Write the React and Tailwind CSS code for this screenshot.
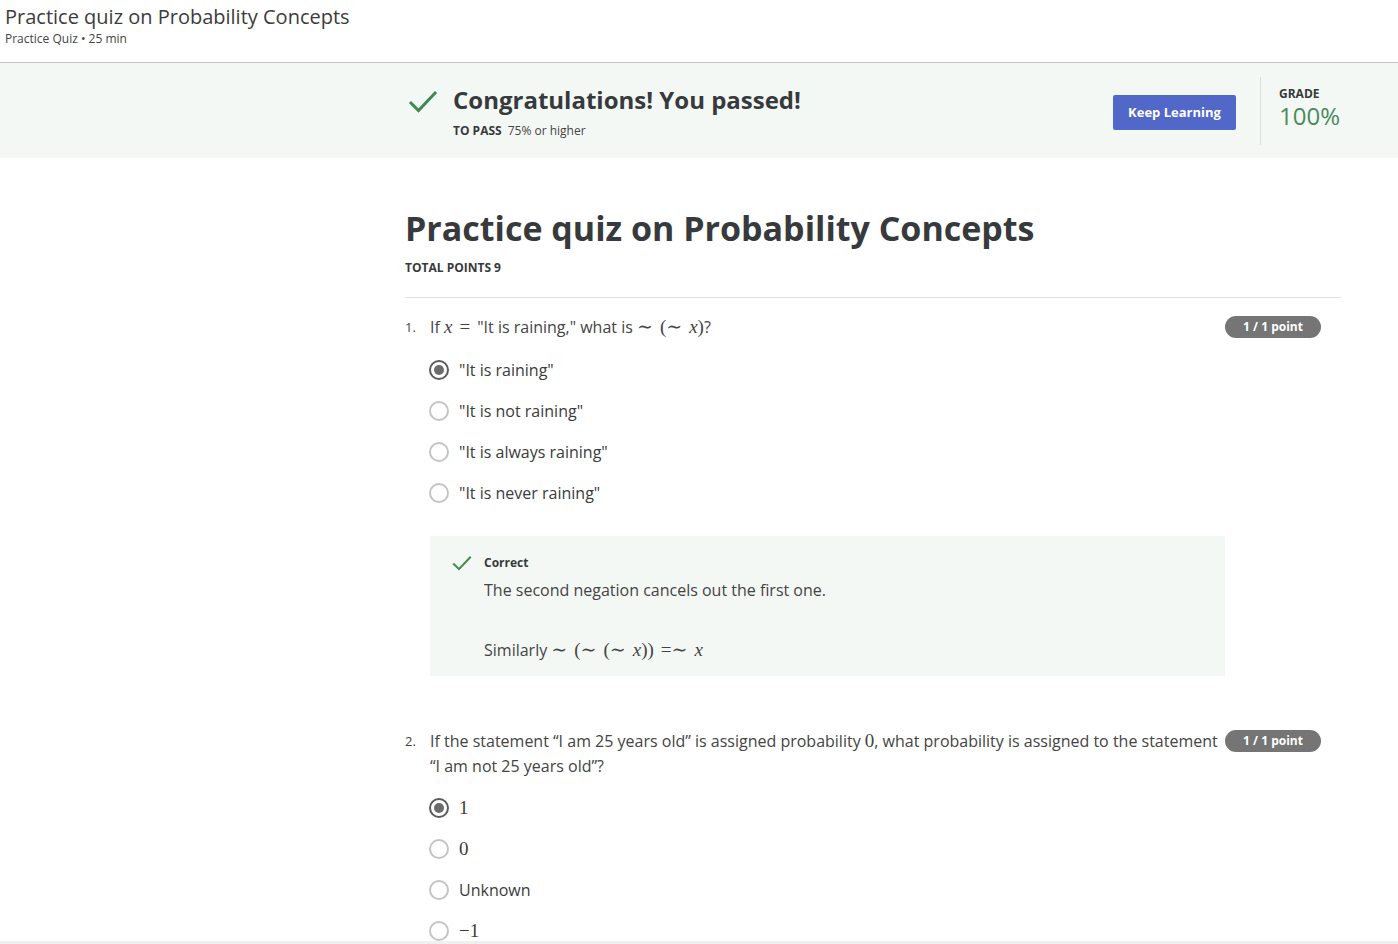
import React from 'react';

const math = "font-['Liberation_Serif','DejaVu_Serif',serif] text-[19px] leading-none";

function Check({ className }) {
    return (
        <svg className={className} viewBox="0 0 30 24" fill="none" stroke="#3f8a52" strokeWidth="3" strokeLinecap="square">
            <polyline points="3,13 10.5,20.5 27,3" />
        </svg>
    );
}

function Radio({ checked }) {
    if (checked) {
        return (
            <span className="w-[20px] h-[20px] rounded-full border-2 border-[#5b5b5b] flex items-center justify-center shrink-0">
                <span className="w-[10px] h-[10px] rounded-full bg-[#6b6b6b]" />
            </span>
        );
    }
    return <span className="w-[20px] h-[20px] rounded-full border-2 border-[#c4c4c4] shrink-0" />;
}

function Badge() {
    return (
        <div className="shrink-0 w-[96px] h-[22px] rounded-full bg-[#757575] text-white text-[12px] font-bold flex items-center justify-center ml-[7px] mr-[20px] mt-[1px]">
            1 / 1 point
        </div>
    );
}

function Option({ checked, children }) {
    return (
        <div className="h-[41px] flex items-center pl-[24px]">
            <Radio checked={checked} />
            <span className="ml-[10px] text-[16px] leading-[24px] text-[#3b3b3b]">{children}</span>
        </div>
    );
}

function X() {
    return <span className={`${math} italic`}>x</span>;
}

// relation symbols get a thick space on both sides, like KaTeX
function Rel({ children, l = true }) {
    return <span className={`${math} ${l ? 'ml-[7px]' : ''} mr-[7px]`}>{children}</span>;
}

function P({ children }) {
    return <span className={math}>{children}</span>;
}

export default function App() {
    return (
        <div className="h-[944px] overflow-hidden flex flex-col bg-white font-['Open_Sans',sans-serif] text-[#333]">
            {/* top header */}
            <div className="h-[63px] shrink-0 border-b border-[#c6c6c6] px-[5px] pt-[3px]">
                <div className="text-[20px] leading-[28px] text-[#3c3c3c]">Practice quiz on Probability Concepts</div>
                <div className="text-[12px] leading-[16px] text-[#444]">Practice Quiz • 25 min</div>
            </div>

            <div className="flex-1 overflow-hidden">
                {/* result band */}
                <div className="h-[95px] bg-[#f4f8f5]">
                    <div className="ml-[405px] w-[936px] flex items-start pt-[14px]">
                        <div className="flex items-start mt-[7px]">
                            <Check className="w-[30px] h-[24px] mt-[6px] ml-[3px]" />
                            <div className="ml-[15px]">
                                <div className="text-[24px] leading-[32px] font-bold text-[#373a3c]">Congratulations! You passed!</div>
                                <div className="mt-[7px] text-[12px] leading-[16px] text-[#444]">
                                    <span className="font-bold text-[#373a3c]">TO PASS</span>
                                    <span className="ml-[6px]">75% or higher</span>
                                </div>
                            </div>
                        </div>
                        <div className="ml-auto flex items-start">
                            <button className="mt-[18px] w-[123px] h-[35px] rounded-[2px] bg-[#5268c8] text-white text-[13px] font-bold">
                                Keep Learning
                            </button>
                            <div className="ml-[24px] w-px h-[68px] bg-[#dcdfdd]" />
                            <div className="pl-[18px] pt-[10px] pr-[1px]">
                                <div className="text-[12px] leading-[14px] font-bold text-[#373a3c]">GRADE</div>
                                <div className="mt-[1px] text-[24px] leading-[28px] text-[#4a8a5c]">100%</div>
                            </div>
                        </div>
                    </div>
                </div>

                {/* quiz body */}
                <div className="ml-[405px] w-[936px]">
                    <h1 className="mt-[48px] text-[34px] leading-[44px] font-bold text-[#373a3c]">
                        Practice quiz on Probability Concepts
                    </h1>
                    <div className="mt-[10px] text-[12px] leading-[16px] font-bold text-[#373a3c]">TOTAL POINTS 9</div>
                    <div className="mt-[21px] h-px bg-[#e1e1e1]" />

                    {/* question 1 */}
                    <div className="pt-[17px] flex items-start">
                        <div className="w-[25px] shrink-0 text-[13px] leading-[24px] text-[#444]">1.</div>
                        <div className="flex-1 text-[16px] leading-[24px] text-[#444]">
                            If <X /><Rel>=</Rel>"It is raining," what is <Rel l={false}>∼</Rel><P>(</P><Rel l={false}>∼</Rel><X /><P>)</P>?
                        </div>
                        <Badge />
                    </div>
                    <div className="mt-[10px]">
                        <Option checked>"It is raining"</Option>
                        <Option>"It is not raining"</Option>
                        <Option>"It is always raining"</Option>
                        <Option>"It is never raining"</Option>
                    </div>

                    <div className="mt-[23px] ml-[25px] w-[795px] h-[140px] bg-[#f4f8f5] flex items-start pt-[19px] pl-[22px]">
                        <Check className="w-[20px] h-[17px] shrink-0" />
                        <div className="ml-[12px]">
                            <div className="text-[12px] leading-[16px] font-bold text-[#373a3c]">Correct</div>
                            <div className="mt-[7px] text-[16px] leading-[24px] text-[#444]">The second negation cancels out the first one.</div>
                            <div className="mt-[36px] text-[16px] leading-[24px] text-[#444]">
                                Similarly <Rel l={false}>∼</Rel><P>(</P><Rel l={false}>∼</Rel><P>(</P><Rel l={false}>∼</Rel><X /><P>))</P><Rel>=∼</Rel><X />
                            </div>
                        </div>
                    </div>

                    {/* question 2 */}
                    <div className="mt-[53px] flex items-start">
                        <div className="w-[25px] shrink-0 text-[13px] leading-[25px] text-[#444]">2.</div>
                        <div className="flex-1 text-[16px] leading-[25px] text-[#444]">
                            If the statement “I am 25 years old” is assigned probability <P>0</P>, what probability is assigned to the statement “I am not 25 years old”?
                        </div>
                        <Badge />
                    </div>
                    <div className="mt-[8px]">
                        <Option checked><P>1</P></Option>
                        <Option><P>0</P></Option>
                        <Option>Unknown</Option>
                        <Option><P>−1</P></Option>
                    </div>
                </div>
            </div>

            <div className="h-[3px] shrink-0 bg-[#f0f0f0]" />
        </div>
    );
}
